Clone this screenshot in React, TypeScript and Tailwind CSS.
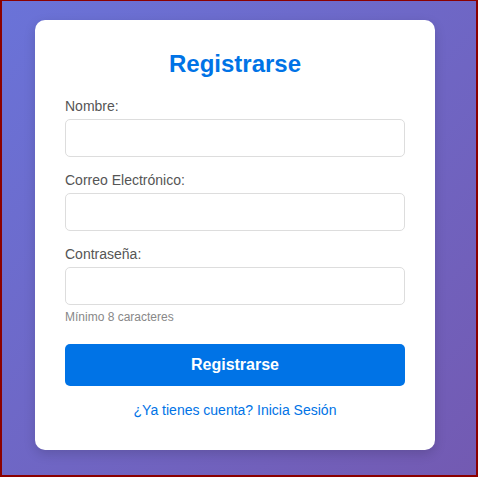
import React from "react";

const fields = [
  { id: "nombre", label: "Nombre:", type: "text" },
  { id: "correo", label: "Correo Electrónico:", type: "email" },
  { id: "password", label: "Contraseña:", type: "password", hint: "Mínimo 8 caracteres" },
];

export default function App() {
  return (
    <div
      className="h-[477px] w-full border-[#8b0000] border-t border-l-2 border-r-2 border-b-2 bg-[linear-gradient(135deg,#6a73d8_0%,#735ab2_100%)] pt-[19px]"
      style={{ fontFamily: '"Liberation Sans", Arial, sans-serif' }}
    >
      <div className="ml-[33px] w-[400px] rounded-[10px] bg-white p-[30px] pb-[31px] shadow-[0_4px_12px_rgba(0,0,0,0.15)]">
        <h1 className="mb-[20px] text-center text-[24px] leading-[28px] font-bold text-[#0073e6]">Registrarse</h1>
        <form onSubmit={(e) => e.preventDefault()}>
          {fields.map((f, i) => (
            <div key={f.id} className={i < fields.length - 1 ? "mb-[15px]" : "mb-[20px]"}>
              <label htmlFor={f.id} className="mb-[5px] block text-[14px] leading-[16px] text-[#555]">
                {f.label}
              </label>
              <input
                id={f.id}
                type={f.type}
                className="block h-[38px] w-full rounded-[5px] border border-[#ddd] bg-white px-[10px] text-[14px] outline-none"
              />
              {f.hint && <p className="mt-[5px] text-[12px] leading-[14px] text-[#888]">{f.hint}</p>}
            </div>
          ))}
          <button
            type="submit"
            className="block h-[42px] w-full rounded-[5px] bg-[#0073e6] text-[16px] font-bold text-white"
          >
            Registrarse
          </button>
        </form>
        <p className="mt-[16px] text-center text-[14px] leading-[17px]">
          <a href="#" className="text-[#0073e6]">¿Ya tienes cuenta? Inicia Sesión</a>
        </p>
      </div>
    </div>
  );
}
